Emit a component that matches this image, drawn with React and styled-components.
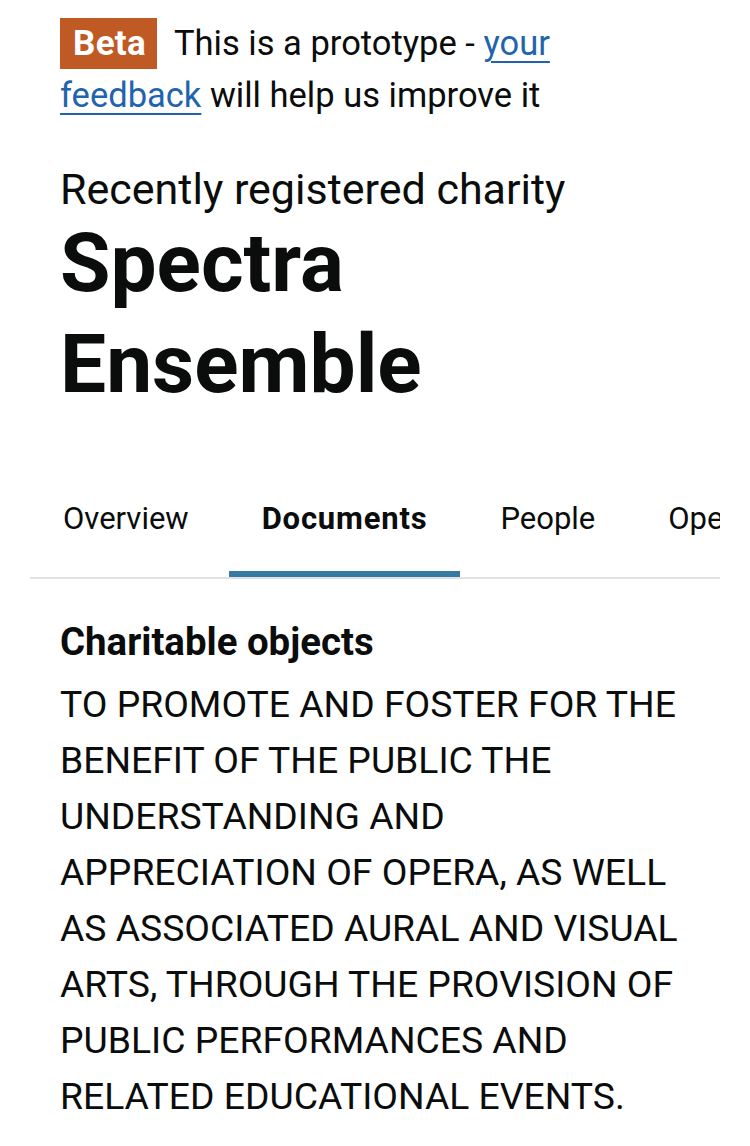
import React from "react";
import styled, { createGlobalStyle } from "styled-components";

const GlobalStyle = createGlobalStyle`
  html, body { margin: 0; padding: 0; background: #ffffff; }
  body {
    font-family: Roboto, "Noto Sans", Arial, sans-serif;
    color: #0b0c0c;
    -webkit-font-smoothing: antialiased;
  }
`;

const Page = styled.div`
  width: 750px;
  box-sizing: border-box;
  padding: 0 30px 40px;
`;

const Inner = styled.div`
  padding: 0 30px;
`;

const PhaseBanner = styled.p`
  margin: 0;
  padding-top: 17px;
  font-size: 34.5px;
  line-height: 52px;
  color: #0b0c0c;
`;

const Tag = styled.strong`
  display: inline;
  background: #c05a24;
  color: #ffffff;
  font-weight: 700;
  font-size: 35px;
  line-height: 1;
  padding: 4.5px 11px 5.5px 13px;
  margin-right: 17px;
  vertical-align: 1px;
  letter-spacing: 0.3px;
`;

const Link = styled.a`
  color: #1f64ac;
  text-decoration: underline;
  text-decoration-thickness: 2px;
  text-underline-offset: 6px;
`;

const Caption = styled.span`
  display: block;
  margin-top: 45px;
  font-size: 43px;
  line-height: 47px;
  color: #0b0c0c;
`;

const Title = styled.h1`
  margin: 0;
  font-size: 82px;
  line-height: 101px;
  font-weight: 700;
  color: #0b0c0c;
`;

const TabList = styled.nav`
  margin-top: 54px;
  display: flex;
  gap: 7px;
  overflow: hidden;
  white-space: nowrap;
  border-bottom: 2px solid #dfe1e3;
`;

const TabItem = styled.a`
  flex: none;
  display: block;
  padding: 30px 33px 32px;
  font-size: 31px;
  line-height: 40px;
  font-weight: ${(p) => (p.$active ? 700 : 400)};
  letter-spacing: ${(p) => (p.$active ? "0.8px" : "0")};
  color: #0b0c0c;
  text-decoration: none;
  border-bottom: 6px solid ${(p) => (p.$active ? "#347aa3" : "transparent")};
`;

const Section = styled.section`
  padding: 39px 30px 0;
`;

const SectionHeading = styled.h2`
  margin: 0;
  font-size: 38.4px;
  line-height: 48px;
  font-weight: 700;
  color: #0b0c0c;
`;

const Body = styled.p`
  margin: 10px 0 0;
  font-size: 37.3px;
  line-height: 56px;
  color: #0b0c0c;
`;

const tabs = [
  { label: "Overview" },
  { label: "Documents", active: true },
  { label: "People" },
  { label: "Operations" },
];

export default function App() {
  return (
    <>
      <GlobalStyle />
      <Page>
        <Inner>
          <PhaseBanner>
            <Tag>Beta</Tag>
            This is a prototype - <Link href="#">your feedback</Link> will help us improve it
          </PhaseBanner>
          <Caption>Recently registered charity</Caption>
          <Title>Spectra Ensemble</Title>
        </Inner>
        <TabList>
          {tabs.map((t) => (
            <TabItem key={t.label} href="#" $active={t.active}>
              {t.label}
            </TabItem>
          ))}
        </TabList>
        <Section>
          <SectionHeading>Charitable objects</SectionHeading>
          <Body>
            TO PROMOTE AND FOSTER FOR THE BENEFIT OF THE PUBLIC THE UNDERSTANDING AND
            APPRECIATION OF OPERA, AS WELL AS ASSOCIATED AURAL AND VISUAL ARTS, THROUGH
            THE PROVISION OF PUBLIC PERFORMANCES AND RELATED EDUCATIONAL EVENTS.
          </Body>
        </Section>
      </Page>
    </>
  );
}
